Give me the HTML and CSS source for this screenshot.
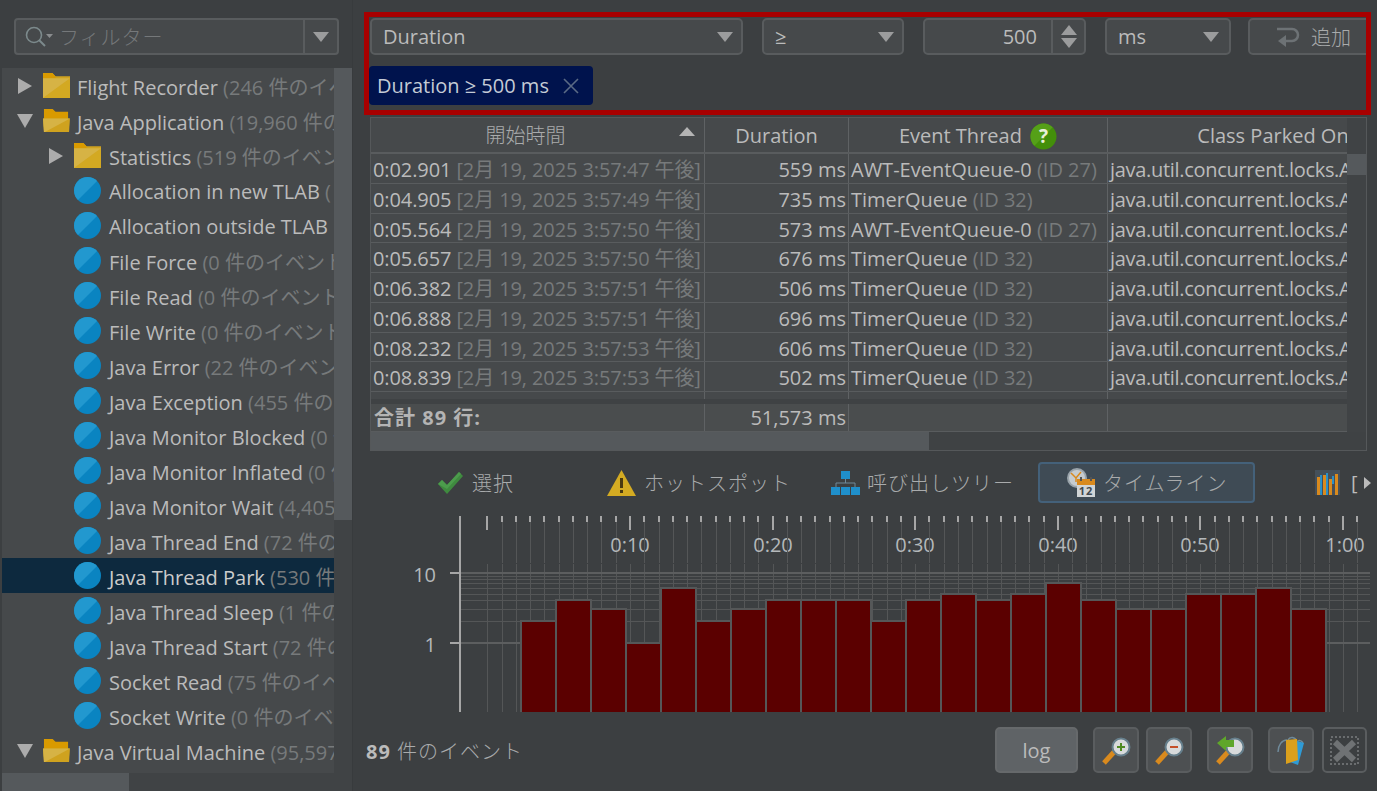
FILE: index.html
```html
<!DOCTYPE html>
<html lang="ja">
<head>
    <meta charset="UTF-8">
    <title>Thread Park Events</title>
    <link rel="stylesheet" href="styles.css">
</head>
<body>
    <!-- Shared icons -->
    <svg class="icon-defs" width="0" height="0">
        <symbol id="folder" viewBox="0 0 26 24">
            <path d="M0 0h9l3 3h14v21H0z" fill="#cfa21f"/>
            <path d="M0 0h9l3 3v2H0z" fill="#d99a00"/>
            <path d="M0 24L26 5v19z" fill="#d3a922"/>
            <path d="M0 5h26L0 24z" fill="#d6b345"/>
        </symbol>
        <symbol id="folder-open" viewBox="0 0 28 24">
            <path d="M1 0h9l3 3h13v9H1z" fill="#d99a00"/>
            <path d="M0 10h28l-1 14H1z" fill="#cfa21f"/>
            <path d="M0 10h28L2 24H1z" fill="#d6b345"/>
        </symbol>
        <symbol id="leaf" viewBox="0 0 27 27">
            <circle cx="13.5" cy="13.5" r="13.5" fill="#0a84c1"/>
            <path d="M4 23.1A13.5 13.5 0 0 1 23.1 4z" fill="#2298cf"/>
        </symbol>
        <symbol id="lens" viewBox="0 0 46 46">
            <path d="M11 36l10-11" stroke="#d98a1e" stroke-width="5"/>
            <circle cx="28" cy="20" r="8.500" fill="#d8dadb" stroke="#667f8c" stroke-width="2"/>
        </symbol>
    </svg>

    <div class="app">
        <!-- Event type tree -->
        <aside class="sidebar">
            <div class="filter-bar">
                <div class="filter-box">
                    <svg class="search-icon" width="28" height="22" viewBox="0 0 28 22">
                        <circle cx="9" cy="9" r="7.5" fill="none" stroke="#7c8a8c" stroke-width="1.6"/>
                        <path d="M14 14l6 6" stroke="#7c8a8c" stroke-width="2"/>
                        <path d="M21 8h7l-3.500 4z" fill="#8a8d8f"/>
                    </svg>
                    <span class="filter-text cjk">フィルター</span>
                    <div class="filter-drop"><span class="caret"></span></div>
                </div>
            </div>
            <div class="tree-wrap">
                <div class="tree">
                    <div class="tree-row"><span class="arrow-right"></span><svg class="ico"><use href="#folder"/></svg><span class="label">Flight Recorder <em>(246 件のイベント)</em></span></div>
                    <div class="tree-row"><span class="arrow-down"></span><svg class="ico"><use href="#folder-open"/></svg><span class="label">Java Application <em>(19,960 件のイベント)</em></span></div>
                    <div class="tree-row lvl2"><span class="arrow-right"></span><svg class="ico"><use href="#folder"/></svg><span class="label">Statistics <em>(519 件のイベント)</em></span></div>
                    <div class="tree-row lvl2"><span class="no-arrow"></span><svg class="ico"><use href="#leaf"/></svg><span class="label">Allocation in new TLAB <em>(</em></span></div>
                    <div class="tree-row lvl2"><span class="no-arrow"></span><svg class="ico"><use href="#leaf"/></svg><span class="label">Allocation outside TLAB</span></div>
                    <div class="tree-row lvl2"><span class="no-arrow"></span><svg class="ico"><use href="#leaf"/></svg><span class="label">File Force <em>(0 件のイベント)</em></span></div>
                    <div class="tree-row lvl2"><span class="no-arrow"></span><svg class="ico"><use href="#leaf"/></svg><span class="label">File Read <em>(0 件のイベント)</em></span></div>
                    <div class="tree-row lvl2"><span class="no-arrow"></span><svg class="ico"><use href="#leaf"/></svg><span class="label">File Write <em>(0 件のイベント)</em></span></div>
                    <div class="tree-row lvl2"><span class="no-arrow"></span><svg class="ico"><use href="#leaf"/></svg><span class="label">Java Error <em>(22 件のイベント)</em></span></div>
                    <div class="tree-row lvl2"><span class="no-arrow"></span><svg class="ico"><use href="#leaf"/></svg><span class="label">Java Exception <em>(455 件のイベント)</em></span></div>
                    <div class="tree-row lvl2"><span class="no-arrow"></span><svg class="ico"><use href="#leaf"/></svg><span class="label">Java Monitor Blocked <em>(0 件</em></span></div>
                    <div class="tree-row lvl2"><span class="no-arrow"></span><svg class="ico"><use href="#leaf"/></svg><span class="label">Java Monitor Inflated <em>(0 件</em></span></div>
                    <div class="tree-row lvl2"><span class="no-arrow"></span><svg class="ico"><use href="#leaf"/></svg><span class="label">Java Monitor Wait <em>(4,405 件</em></span></div>
                    <div class="tree-row lvl2"><span class="no-arrow"></span><svg class="ico"><use href="#leaf"/></svg><span class="label">Java Thread End <em>(72 件のイベント)</em></span></div>
                    <div class="tree-row lvl2 selected"><span class="no-arrow"></span><svg class="ico"><use href="#leaf"/></svg><span class="label">Java Thread Park <em>(530 件のイベント)</em></span></div>
                    <div class="tree-row lvl2"><span class="no-arrow"></span><svg class="ico"><use href="#leaf"/></svg><span class="label">Java Thread Sleep <em>(1 件のイベント)</em></span></div>
                    <div class="tree-row lvl2"><span class="no-arrow"></span><svg class="ico"><use href="#leaf"/></svg><span class="label">Java Thread Start <em>(72 件のイベント)</em></span></div>
                    <div class="tree-row lvl2"><span class="no-arrow"></span><svg class="ico"><use href="#leaf"/></svg><span class="label">Socket Read <em>(75 件のイベント)</em></span></div>
                    <div class="tree-row lvl2"><span class="no-arrow"></span><svg class="ico"><use href="#leaf"/></svg><span class="label">Socket Write <em>(0 件のイベント)</em></span></div>
                    <div class="tree-row"><span class="arrow-down"></span><svg class="ico"><use href="#folder-open"/></svg><span class="label">Java Virtual Machine <em>(95,597 件</em></span></div>
                </div>
                <div class="tree-vscroll"><div class="tree-vthumb"></div></div>
            </div>
            <div class="tree-hscroll"><div class="tree-hthumb"></div></div>
        </aside>

        <main class="content">
            <!-- Filter builder -->
            <section class="filter-panel">
                <div class="filter-row">
                    <div class="select select-field"><span>Duration</span><span class="caret"></span></div>
                    <div class="select select-op"><span>≥</span><span class="caret"></span></div>
                    <div class="spinner">
                        <span class="spinner-value">500</span>
                        <div class="spinner-btns"><span class="tri-up"></span><span class="tri-down"></span></div>
                    </div>
                    <div class="select select-unit"><span>ms</span><span class="caret"></span></div>
                    <div class="add-btn">
                        <svg width="24" height="22" viewBox="0 0 24 22">
                            <path d="M1 3h15a6 6 0 0 1 0 12H8" fill="none" stroke="#6d7275" stroke-width="2.500"/>
                            <path d="M10 9v12l-8-6z" fill="#6d7275"/>
                        </svg>
                        <span class="cjk">追加</span>
                    </div>
                </div>
                <div class="chip">
                    Duration ≥ 500 ms
                    <svg class="chip-x" width="16" height="16" viewBox="0 0 16 16"><path d="M1 1l14 14M15 1L1 15" stroke="#5a6a85" stroke-width="1.600"/></svg>
                </div>
            </section>

            <!-- Events table -->
            <section class="table-box">
                <div class="table-main">
                    <div class="t-clip">
                        <div class="t-row t-head">
                            <div class="cell sorted"><span class="cjk">開始時間</span><span class="sort-arrow"></span></div>
                            <div class="cell">Duration</div>
                            <div class="cell">Event Thread
                                <svg class="help" width="27" height="27" viewBox="0 0 27 27"><circle cx="13.500" cy="13.500" r="13" fill="#438f0a"/><path d="M4.300 22.700A13 13 0 0 1 22.700 4.300z" fill="#55a018"/><text x="13.500" y="20" class="help-mark">?</text></svg>
                            </div>
                            <div class="cell">Class Parked On</div>
                        </div>
                        <div class="t-body">
                            <div class="t-row"><div class="cell">0:02.901 <em>[2月 19, 2025 3:57:47 午後]</em></div><div class="cell num">559 ms</div><div class="cell">AWT-EventQueue-0 <em>(ID 27)</em></div><div class="cell">java.util.concurrent.locks.AbstractQueuedSynchronizer</div></div>
                            <div class="t-row"><div class="cell">0:04.905 <em>[2月 19, 2025 3:57:49 午後]</em></div><div class="cell num">735 ms</div><div class="cell">TimerQueue <em>(ID 32)</em></div><div class="cell">java.util.concurrent.locks.AbstractQueuedSynchronizer</div></div>
                            <div class="t-row"><div class="cell">0:05.564 <em>[2月 19, 2025 3:57:50 午後]</em></div><div class="cell num">573 ms</div><div class="cell">AWT-EventQueue-0 <em>(ID 27)</em></div><div class="cell">java.util.concurrent.locks.AbstractQueuedSynchronizer</div></div>
                            <div class="t-row"><div class="cell">0:05.657 <em>[2月 19, 2025 3:57:50 午後]</em></div><div class="cell num">676 ms</div><div class="cell">TimerQueue <em>(ID 32)</em></div><div class="cell">java.util.concurrent.locks.AbstractQueuedSynchronizer</div></div>
                            <div class="t-row"><div class="cell">0:06.382 <em>[2月 19, 2025 3:57:51 午後]</em></div><div class="cell num">506 ms</div><div class="cell">TimerQueue <em>(ID 32)</em></div><div class="cell">java.util.concurrent.locks.AbstractQueuedSynchronizer</div></div>
                            <div class="t-row"><div class="cell">0:06.888 <em>[2月 19, 2025 3:57:51 午後]</em></div><div class="cell num">696 ms</div><div class="cell">TimerQueue <em>(ID 32)</em></div><div class="cell">java.util.concurrent.locks.AbstractQueuedSynchronizer</div></div>
                            <div class="t-row"><div class="cell">0:08.232 <em>[2月 19, 2025 3:57:53 午後]</em></div><div class="cell num">606 ms</div><div class="cell">TimerQueue <em>(ID 32)</em></div><div class="cell">java.util.concurrent.locks.AbstractQueuedSynchronizer</div></div>
                            <div class="t-row"><div class="cell">0:08.839 <em>[2月 19, 2025 3:57:53 午後]</em></div><div class="cell num">502 ms</div><div class="cell">TimerQueue <em>(ID 32)</em></div><div class="cell">java.util.concurrent.locks.AbstractQueuedSynchronizer</div></div>
                            <div class="t-row"><div class="cell"></div><div class="cell num"></div><div class="cell"></div><div class="cell">java.util.concurrent.locks.AbstractQueuedSynchronizer</div></div>
                        </div>
                        <div class="t-row t-total">
                            <div class="cell"><b>合計 89 行:</b></div>
                            <div class="cell num">51,573 ms</div>
                            <div class="cell"></div>
                            <div class="cell"></div>
                        </div>
                    </div>
                    <div class="t-vscroll"><div class="t-vthumb"></div></div>
                </div>
                <div class="t-hscroll"><div class="t-hthumb"></div></div>
            </section>

            <!-- Result tabs -->
            <nav class="tabs">
                <div class="tab tab-select">
                    <svg width="27" height="24" viewBox="0 0 27 24"><path d="M1 13l4-4 5 5L22 1l4 4-16 18z" fill="#3f8a3f"/><path d="M1 13l4-4 5 5L22 1l2 2-14 15z" fill="#4c9c4c"/></svg>
                    <span class="cjk">選択</span>
                </div>
                <div class="tab tab-hot">
                    <svg width="29" height="26" viewBox="0 0 29 26"><path d="M14.500 0L29 26H0z" fill="#d4ab22"/><rect x="13" y="8" width="3" height="10" fill="#4a3a10"/><rect x="13" y="20" width="3" height="3" fill="#4a3a10"/></svg>
                    <span class="cjk">ホットスポット</span>
                </div>
                <div class="tab tab-tree">
                    <svg width="29" height="24" viewBox="0 0 29 24"><path d="M14.500 8v4M5 16v-4h19v4" fill="none" stroke="#6f8a9a" stroke-width="1"/><g fill="#1f8fcb"><rect x="10" y="0" width="9" height="8"/><rect x="0" y="16" width="9" height="8"/><rect x="10" y="16" width="9" height="8"/><rect x="20" y="16" width="9" height="8"/></g></svg>
                    <span class="cjk">呼び出しツリー</span>
                </div>
                <div class="tab tab-time">
                    <svg width="29" height="29" viewBox="0 0 29 29">
                        <circle cx="10" cy="10" r="10" fill="#9aa4ab"/>
                        <circle cx="10" cy="10" r="8" fill="#c6ccd0"/>
                        <path d="M4 5l5 5 5-6M9 10v4" fill="none" stroke="#d98a1e" stroke-width="1.500"/>
                        <rect x="10" y="11" width="18" height="18" fill="#d0d4d6"/>
                        <rect x="10" y="11" width="18" height="6" fill="#d98a1e"/>
                        <rect x="13" y="9" width="2" height="4" fill="#555"/><rect x="23" y="9" width="2" height="4" fill="#555"/>
                        <text x="19" y="27" class="cal-day">12</text>
                    </svg>
                    <span class="cjk">タイムライン</span>
                </div>
                <div class="tab tab-more">
                    <svg width="25" height="25" viewBox="0 0 25 25">
                        <rect width="25" height="25" fill="#45505a"/>
                        <g fill="#d98a1e"><rect x="2" y="7" width="3" height="18"/><rect x="8" y="5" width="3" height="20"/><rect x="14" y="9" width="3" height="16"/><rect x="20" y="4" width="3" height="21"/></g>
                        <g fill="#2a90c8"><rect x="5" y="5" width="2" height="20"/><rect x="11" y="3" width="2" height="22"/><rect x="17" y="6" width="2" height="8"/></g>
                    </svg>
                    <span class="more-text">[</span>
                    <span class="more-arrow"></span>
                </div>
            </nav>

            <svg class="chart" id="chart" width="1007" height="196" viewBox="364 516 1007 196"></svg>

            <footer class="status">
                <div class="count"><b>89</b> <span class="cjk">件のイベント</span></div>
                <div class="log-btn">log</div>
                <div class="tool-btn">
                    <svg width="46" height="46"><use href="#lens"/><path d="M24 20h8M28 16v8" stroke="#4f8a22" stroke-width="2"/></svg>
                </div>
                <div class="tool-btn gap-small">
                    <svg width="46" height="46"><use href="#lens"/><path d="M24 20h8" stroke="#c4502a" stroke-width="2"/></svg>
                </div>
                <div class="tool-btn gap-big">
                    <svg width="46" height="46"><use href="#lens"/><path d="M10 16l9-7v4h8v7h-8v4z" fill="#5fa62a"/></svg>
                </div>
                <div class="tool-btn gap-big">
                    <svg width="46" height="46" viewBox="0 0 46 46">
                        <path d="M10 25c0-7 4-12 9-12M20 13c2-4 7-3 9 1M30 14c2-1 4 0 5 2" fill="none" stroke="#6f8a9a" stroke-width="1.500"/>
                        <path d="M26 13l10 3-6 22-8-3z" fill="#2f9bd6"/>
                        <path d="M18 13l11-1 1 21-12 4z" fill="#dba01c"/>
                    </svg>
                </div>
                <div class="tool-btn disabled">
                    <svg width="45" height="46" viewBox="0 0 45 46">
                        <rect x="9" y="10" width="27" height="27" fill="none" stroke="#6a6d6f" stroke-width="2" stroke-dasharray="2 2"/>
                        <path d="M13 15l19 18M32 15L13 33" stroke="#6f7274" stroke-width="6"/>
                    </svg>
                </div>
            </footer>
        </main>
    </div>

    <script src="chart.js"></script>
</body>
</html>
```

FILE: styles.css
```css
* {
    box-sizing: border-box;
}

html, body {
    margin: 0;
    height: 100%;
}

body {
    background-color: #3c3f41;
    color: #bbbbbb;
    font-family: "Open Sans", "Noto Sans CJK JP", sans-serif;
    font-size: 20px;
    overflow: hidden;
}

em {
    font-style: normal;
    color: #777a7b;
}

/* Japanese labels are thin in the original UI */
.cjk {
    font-weight: 200;
    color: #a9abac;
}

.icon-defs {
    position: absolute;
}

.app {
    display: flex;
    width: 1377px;
    height: 791px;
}

/* Shared triangle */
.caret {
    width: 0;
    height: 0;
    border-left: 8px solid transparent;
    border-right: 8px solid transparent;
    border-top: 10px solid #9b9c9d;
}

/* Sidebar */
.sidebar {
    width: 353px;
    flex-shrink: 0;
    display: flex;
    flex-direction: column;
    padding-left: 2px;
    border-right: 1px solid #383b3d;
}

.filter-bar {
    height: 68px;
    padding: 18px 13px 0 12px;
}

.filter-box {
    display: flex;
    align-items: center;
    height: 37px;
    background-color: #46494b;
    border: 2px solid #595c5e;
    border-radius: 4px;
    padding-left: 9px;
}

.search-icon {
    flex-shrink: 0;
}

.filter-text {
    margin-left: 6px;
    color: #75787a;
    flex: 1;
    letter-spacing: 1px;
}

.filter-drop {
    width: 34px;
    height: 100%;
    border-left: 2px solid #595c5e;
    display: flex;
    align-items: center;
    justify-content: center;
}

.tree-wrap {
    display: flex;
    height: 705px;
}

.tree {
    width: 332px;
    background-color: #46494b;
    overflow: hidden;
}

.tree-row {
    display: flex;
    align-items: center;
    height: 35px;
    padding-left: 15px;
    white-space: nowrap;
}

.tree-row.lvl2 {
    padding-left: 46px;
}

.tree-row.selected {
    background-color: #0d293e;
    color: #cccccc;
}

.arrow-right,
.arrow-down,
.no-arrow {
    width: 26px;
    flex-shrink: 0;
}

.arrow-right::before,
.arrow-down::before {
    content: '';
    display: block;
    width: 0;
    height: 0;
}

.arrow-right::before {
    border-top: 8px solid transparent;
    border-bottom: 8px solid transparent;
    border-left: 14px solid #acacac;
    margin-left: 1px;
}

.arrow-down::before {
    border-left: 8px solid transparent;
    border-right: 8px solid transparent;
    border-top: 14px solid #acacac;
}

.ico {
    width: 27px;
    height: 27px;
    flex-shrink: 0;
}

.label {
    margin-left: 7px;
    padding-top: 2px;
}

.lvl2 .label {
    margin-left: 8px;
}

.tree-vscroll {
    width: 18px;
    background-color: #404345;
}

.tree-vthumb {
    height: 452px;
    background-color: #55595c;
}

.tree-hscroll {
    height: 18px;
    background-color: #404345;
}

.tree-hthumb {
    width: 127px;
    height: 100%;
    background-color: #55595c;
}

/* Main column */
.content {
    width: 1024px;
    padding: 12px 6px 0 11px;
}

.filter-panel {
    height: 103px;
    border: 5px solid #a80000;
    padding: 1px 0 0 1px;
    overflow: hidden;
}

.filter-row {
    display: flex;
    height: 37px;
}

.select,
.spinner,
.add-btn {
    height: 37px;
    flex-shrink: 0;
    background-color: #46494b;
    border: 2px solid #595c5e;
    border-radius: 5px;
    display: flex;
    align-items: center;
}

.select {
    justify-content: space-between;
    padding: 0 8px 0 11px;
}

.select-field {
    width: 373px;
}

.select-op {
    width: 142px;
    margin-left: 19px;
}

.spinner {
    width: 163px;
    margin-left: 19px;
}

.spinner-value {
    width: 126px;
    text-align: right;
    padding-right: 14px;
}

.spinner-btns {
    flex: 1;
    height: 100%;
    border-left: 2px solid #595c5e;
    display: flex;
    flex-direction: column;
    align-items: center;
    justify-content: center;
    gap: 3px;
}

.tri-up,
.tri-down {
    width: 0;
    height: 0;
    border-left: 8px solid transparent;
    border-right: 8px solid transparent;
}

.tri-up {
    border-bottom: 10px solid #9b9c9d;
}

.tri-down {
    border-top: 10px solid #9b9c9d;
}

.select-unit {
    width: 126px;
    margin-left: 19px;
    padding-right: 10px;
}

.add-btn {
    width: 140px;
    margin-left: 17px;
    padding-left: 26px;
    gap: 11px;
}

.chip {
    display: inline-flex;
    align-items: center;
    height: 39px;
    width: 224px;
    margin: 11px 0 0 -1px;
    padding-left: 8px;
    background-color: #00134d;
    border-radius: 4px;
    color: #c4cbd6;
}

.chip-x {
    margin-left: 14px;
}

/* Events table */
.table-box {
    height: 334px;
    width: 997px;
    margin: 2px 0 0 6px;
    border: 1px solid #55585a;
    display: flex;
    flex-direction: column;
}

.table-main {
    display: flex;
    height: 314px;
}

.t-clip {
    width: 976px;
    overflow: hidden;
}

.t-row {
    display: grid;
    grid-template-columns: 334px 144px 259px 330px;
    height: 29.75px;
    width: 1067px;
    background-color: #46494b;
    border-bottom: 1px solid #595c5e;
}

.cell {
    border-right: 1px solid #5f6264;
    padding: 2px 2px 0;
    white-space: nowrap;
    overflow: hidden;
    line-height: 27px;
}

.cell:last-child {
    border-right: none;
}

.t-body .cell:first-child {
    letter-spacing: -0.1px;
}

.t-body .cell:last-child {
    letter-spacing: -0.3px;
}

.num {
    text-align: right;
}

.t-head {
    height: 36px;
    border-bottom: 2px solid #595c5e;
}

.t-head .cell {
    position: relative;
    text-align: center;
    padding-top: 0;
    line-height: 35px;
}

.t-head .sorted {
    padding-right: 26px;
}

.sort-arrow {
    position: absolute;
    right: 9px;
    top: 9px;
    width: 0;
    height: 0;
    border-left: 8px solid transparent;
    border-right: 8px solid transparent;
    border-bottom: 9px solid #b4b4b4;
}

.help {
    vertical-align: -7px;
    margin-left: 3px;
}

.help-mark {
    fill: #e8f0d8;
    font-size: 19px;
    font-weight: 700;
    text-anchor: middle;
}

.t-body {
    height: 250px;
    overflow: hidden;
    border-bottom: 5px solid #3f4244;
}

.t-total {
    height: 28px;
    background-color: #4a4d4e;
}

.t-total .cell {
    padding-top: 0;
    line-height: 27px;
}

.t-total b {
    color: #b4b4b4;
    letter-spacing: 1px;
    margin-left: 1px;
}

.t-vscroll {
    flex: 1;
    background-color: #404345;
    padding-top: 36px;
}

.t-vthumb {
    height: 21px;
    background-color: #55595c;
}

.t-hscroll {
    height: 18px;
    background-color: #3f4244;
}

.t-hthumb {
    width: 558px;
    height: 100%;
    background-color: #55595c;
}

/* Tabs */
.tabs {
    display: flex;
    align-items: center;
    height: 41px;
    margin-top: 11px;
    white-space: nowrap;
    overflow: hidden;
}

.tab {
    display: flex;
    align-items: center;
    flex-shrink: 0;
    gap: 8px;
    letter-spacing: 1px;
}

.tab-select {
    margin-left: 73px;
}

.tab-hot {
    margin-left: 93px;
}

.tab-tree {
    margin-left: 40px;
    gap: 7px;
}

.tab-time {
    width: 217px;
    height: 41px;
    margin-left: 24px;
    padding-left: 27px;
    background-color: #3f4b55;
    border: 2px solid #44617a;
    border-radius: 4px;
    gap: 7px;
}

.tab-more {
    margin-left: 60px;
    gap: 0;
}

.more-text {
    margin-left: 11px;
}

.more-arrow {
    margin-left: 5px;
    width: 0;
    height: 0;
    border-top: 6px solid transparent;
    border-bottom: 6px solid transparent;
    border-left: 7px solid #bbbbbb;
}

.cal-day {
    fill: #40484e;
    font-size: 11px;
    font-weight: 700;
    text-anchor: middle;
}

/* Chart */
.chart {
    display: block;
    margin-top: 13px;
}

.chart text {
    fill: #b4b8ba;
    font-size: 20px;
}

.grid-line {
    stroke: #545657;
    stroke-width: 1;
    shape-rendering: crispEdges;
}

.grid-strong {
    stroke: #5c5e5f;
    stroke-width: 2;
    shape-rendering: crispEdges;
}

.tick-line {
    stroke: #a6a6a6;
    stroke-width: 2;
    shape-rendering: crispEdges;
}

.bar {
    fill: #5b0000;
    stroke: #555758;
    stroke-width: 2;
    shape-rendering: crispEdges;
}

/* Bottom bar */
.status {
    display: flex;
    align-items: center;
    margin-top: 15px;
    height: 46px;
    padding-right: 4px;
}

.count {
    margin-left: 2px;
    margin-right: auto;
    letter-spacing: 1px;
}

.log-btn {
    width: 83px;
    height: 46px;
    background-color: #5f6366;
    border: 2px solid #66696b;
    border-radius: 5px;
    text-align: center;
    line-height: 44px;
    margin-right: 15px;
}

.tool-btn {
    width: 46px;
    height: 46px;
    background-color: #4d5052;
    border: 2px solid #5a5d5f;
    border-radius: 5px;
    overflow: hidden;
}

.tool-btn svg {
    display: block;
    margin: -2px 0 0 -2px;
}

.gap-small {
    margin-left: 7px;
}

.gap-big {
    margin-left: 15px;
}

.disabled {
    margin-left: 8px;
    width: 45px;
    background-color: #3c3f41;
}
```

FILE: chart.js
```js
// Draws the event histogram on a log scale, using page pixels as chart units
const svgNs = "http://www.w3.org/2000/svg";
const chart = document.getElementById("chart");

const counts = [2, 4, 3, 1, 6, 2, 3, 4, 4, 4, 2, 4, 5, 4, 5, 7, 4, 3, 3, 5, 5, 6, 3];
const secondX = s => Math.round(630 + 14.26 * (s - 10));
const countY = n => Math.round(642.5 - 70 * Math.log10(n));

function add(tag, attrs, text) {
    const el = document.createElementNS(svgNs, tag);
    Object.keys(attrs).forEach(k => el.setAttribute(k, attrs[k]));
    if (text) el.textContent = text;
    chart.appendChild(el);
}

function line(x1, y1, x2, y2, cls) {
    add("line", { x1: x1, y1: y1, x2: x2, y2: y2, class: cls });
}

// Vertical grid and ticks
for (let s = 0; s <= 61; s++) {
    const x = secondX(s);
    const major = s % 10 === 0;
    if (!major) line(x, 522, x, 563, "grid-line");
    line(x, 564, x, 712, "grid-line");
    line(x, 516, x, major ? 530 : 522, "tick-line");
    if (major && s > 0) {
        const label = s === 60 ? "1:00" : "0:" + s;
        add("text", { x: x + (s === 60 ? 2 : 0), y: 552, "text-anchor": "middle" }, label);
    }
}

// Horizontal grid, one line per log step
for (let n = 2; n <= 9; n++) {
    line(460, countY(n), 1370, countY(n), "grid-line");
}
line(460, countY(1), 1370, countY(1), "grid-strong");
line(460, countY(10), 1370, countY(10), "grid-strong");

// Bars
counts.forEach((n, i) => {
    const x = 521 + i * 35;
    const y = countY(n);
    add("rect", { x: x, y: y, width: 35, height: 720 - y, class: "bar" });
});

// Axis
line(460, 516, 460, 712, "tick-line");
line(450, countY(10), 460, countY(10), "tick-line");
line(450, countY(1), 460, countY(1), "tick-line");
add("text", { x: 436, y: 582, "text-anchor": "end" }, "10");
add("text", { x: 436, y: 652, "text-anchor": "end" }, "1");
```
